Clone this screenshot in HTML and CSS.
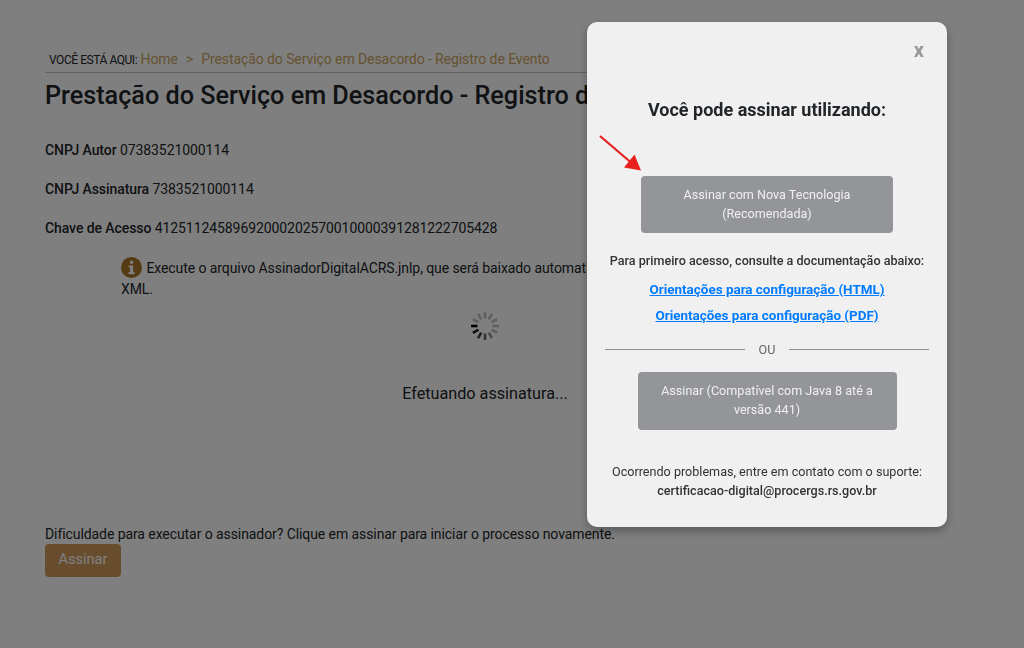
FILE: index.html
```html
<!DOCTYPE html>
<html lang="pt-BR">
<head>
<meta charset="utf-8">
<title>Prestação do Serviço em Desacordo - Registro de Evento</title>
<link rel="stylesheet" href="styles.css">
</head>
<body>
<main class="page">
  <nav class="crumbs"><span class="crumbs-label">VOCÊ ESTÁ AQUI:</span> <a class="crumb" href="#">Home</a><span class="crumb-sep">&gt;</span><a class="crumb" href="#">Prestação do Serviço em Desacordo - Registro de Evento</a></nav>
  <h1 class="title">Prestação do Serviço em Desacordo - Registro de Evento</h1>
  <p class="field"><strong class="label">CNPJ Autor</strong> 07383521000114</p>
  <p class="field"><strong class="label">CNPJ Assinatura</strong> 7383521000114</p>
  <p class="field"><strong class="label">Chave de Acesso</strong> 41251124589692000202570010000391281222705428</p>
  <p class="info">
    <svg class="info-icon" viewBox="0 0 20 20" aria-hidden="true"><circle cx="10" cy="10" r="10" fill="#ad7526"/><rect x="8.6" y="3.6" width="3" height="2.8" fill="#fff"/><path d="M7.2 8h4.4v6.4h1.3v2H7.2v-2h1.4V10H7.2z" fill="#fff"/></svg>
    Execute o arquivo AssinadorDigitalACRS.jnlp, que será baixado automaticamente, para assinar o arquivo XML.
  </p>
  <div class="loader">
    <svg class="spinner" viewBox="1 1 28 28" aria-hidden="true">
      <rect width="30" height="30" fill="#fff" fill-opacity=".06"/>
      <g stroke="#000" stroke-width="2.4">
        <line x1="2" y1="15" x2="8" y2="15" stroke-opacity="1"/>
        <line x1="3.7" y1="21.5" x2="8.9" y2="18.5" stroke-opacity=".9"/>
        <line x1="8.5" y1="26.3" x2="11.5" y2="21.1" stroke-opacity=".75"/>
        <line x1="15" y1="28" x2="15" y2="22" stroke-opacity=".6"/>
        <line x1="21.5" y1="26.3" x2="18.5" y2="21.1" stroke-opacity=".4"/>
        <line x1="26.3" y1="21.5" x2="21.1" y2="18.5" stroke-opacity=".28"/>
        <line x1="28" y1="15" x2="22" y2="15" stroke-opacity=".25"/>
        <line x1="26.3" y1="8.5" x2="21.1" y2="11.5" stroke-opacity=".25"/>
        <line x1="21.5" y1="3.7" x2="18.5" y2="8.9" stroke-opacity=".25"/>
        <line x1="15" y1="2" x2="15" y2="8" stroke-opacity=".25"/>
        <line x1="8.5" y1="3.7" x2="11.5" y2="8.9" stroke-opacity=".25"/>
        <line x1="3.7" y1="8.5" x2="8.9" y2="11.5" stroke-opacity=".25"/>
      </g>
    </svg>
    <p class="loader-text">Efetuando assinatura...</p>
  </div>
  <p class="hint">Dificuldade para executar o assinador? Clique em assinar para iniciar o processo novamente.</p>
  <button class="sign" type="button">Assinar</button>
</main>

<div class="overlay"></div>

<section class="modal">
  <div class="close-row"><button class="close" type="button">x</button></div>
  <h2 class="modal-title">Você pode assinar utilizando:</h2>
  <svg class="arrow" viewBox="0 0 44 38" aria-hidden="true"><line x1="1" y1="1" x2="32" y2="27.500" stroke="#e8211f" stroke-width="2.3"/><path d="M42 35.500 L25 32.500 L35.500 19.500z" fill="#e8211f"/></svg>
  <button class="action action-new" type="button">Assinar com Nova Tecnologia<br>(Recomendada)</button>
  <p class="doc-title">Para primeiro acesso, consulte a documentação abaixo:</p>
  <a class="doc-link" href="#">Orientações para configuração (HTML)</a>
  <a class="doc-link" href="#">Orientações para configuração (PDF)</a>
  <div class="divider"><span class="divider-text">OU</span></div>
  <button class="action action-java" type="button">Assinar (Compatível com Java 8 até a versão 441)</button>
  <p class="support">Ocorrendo problemas, entre em contato com o suporte:<br><strong class="support-mail">certificacao-digital@procergs.rs.gov.br</strong></p>
</section>
</body>
</html>
```

FILE: styles.css
```css
* { box-sizing: border-box; }

html, body {
  margin: 0;
  height: 100%;
  overflow: hidden;
}

body {
  background: #fff;
  color: #212529;
  font-family: Roboto, "Liberation Sans", sans-serif;
  font-size: 14px;
  line-height: 21px;
  letter-spacing: -.08px;
}

.page {
  width: 880px;
  margin-left: 45px;
  padding-top: 49px;
}

.crumbs {
  height: 24px;
  padding-left: 4px;
  border-bottom: 1px solid #c4c4c4;
  color: #cca662;
  line-height: 21px;
  white-space: nowrap;
}

.crumbs-label {
  font-size: 12px;
  letter-spacing: -.45px;
  color: #212529;
}

.crumb {
  color: #cca662;
  text-decoration: none;
}

.crumb-sep {
  margin: 0 8px;
}

.title {
  margin: 8px 0 0;
  font-size: 25.2px;
  line-height: 30px;
  font-weight: 500;
  letter-spacing: 0;
  white-space: nowrap;
}

.field {
  margin: 0 0 18px;
}

.title + .field {
  margin-top: 29px;
}

.label {
  font-weight: 500;
}

.info {
  width: 680px;
  margin: 0 0 0 76px;
}

.info-icon {
  width: 21px;
  height: 21px;
  margin-right: 1px;
  vertical-align: -5px;
}

.loader {
  display: flex;
  flex-direction: column;
  align-items: center;
  padding-top: 11px;
}

.spinner {
  width: 30px;
  height: 30px;
}

.loader-text {
  margin: 41px 0 0;
  font-size: 16.2px;
  line-height: 24px;
  letter-spacing: 0;
}

.hint {
  margin: 118px 0 0;
  line-height: 20px;
}

.sign {
  display: block;
  width: 76px;
  height: 33px;
  padding: 0 0 3px;
  border: 0;
  border-radius: 4px;
  background: #cf9a5c;
  color: #fff;
  font: 14.5px Roboto, "Liberation Sans", sans-serif;
}

.overlay {
  position: fixed;
  inset: 0;
  background: rgba(0, 0, 0, .5);
}

.modal {
  position: fixed;
  left: 587px;
  top: 22px;
  width: 360px;
  height: 505px;
  display: flex;
  flex-direction: column;
  align-items: center;
  padding: 0 18px;
  border-radius: 10px;
  background: #f0f0f0;
  box-shadow: 0 4px 10px rgba(0, 0, 0, .3);
  color: #333;
  letter-spacing: 0;
}

.close-row {
  align-self: stretch;
  display: flex;
  justify-content: flex-end;
  padding: 18px 5px 0 0;
}

.close {
  padding: 0;
  border: 0;
  background: none;
  color: #999;
  font: 700 20px/21px Roboto, "Liberation Sans", sans-serif;
}

.modal-title {
  margin: 37px 0 0;
  color: #212529;
  font-size: 18px;
  line-height: 24px;
  font-weight: 700;
}

.arrow {
  position: absolute;
  left: 12px;
  top: 113px;
  width: 44px;
  height: 38px;
}

.action {
  display: block;
  padding: 0 16px;
  border: 0;
  border-radius: 4px;
  background: #939598;
  color: #f0f0f0;
  font: 12.6px/19px Roboto, "Liberation Sans", sans-serif;
}

.action-new {
  width: 252px;
  height: 57px;
  margin-top: 54px;
  padding-bottom: 2px;
}

.action-java {
  width: 259px;
  height: 58px;
  margin-top: 13px;
  padding-bottom: 2px;
}

.doc-title {
  margin: 18px 0 0;
  font-size: 12.6px;
  line-height: 19px;
  font-weight: 500;
  white-space: nowrap;
}

.doc-link {
  margin-top: 7px;
  color: #007bff;
  font-size: 13.44px;
  line-height: 19px;
  font-weight: 700;
  text-decoration: underline;
}

.doc-title + .doc-link {
  margin-top: 10px;
}

.divider {
  align-self: stretch;
  display: flex;
  align-items: center;
  gap: 14px;
  margin-top: 15px;
  color: #666;
  font-size: 12.6px;
  line-height: 19px;
}

.divider::before,
.divider::after {
  content: "";
  flex: 1;
  height: 1px;
  background: #8f8f8f;
}

.support {
  margin: 32px 0 0;
  font-size: 12.6px;
  line-height: 19px;
  text-align: center;
}

.support-mail {
  font-weight: 500;
}
```
